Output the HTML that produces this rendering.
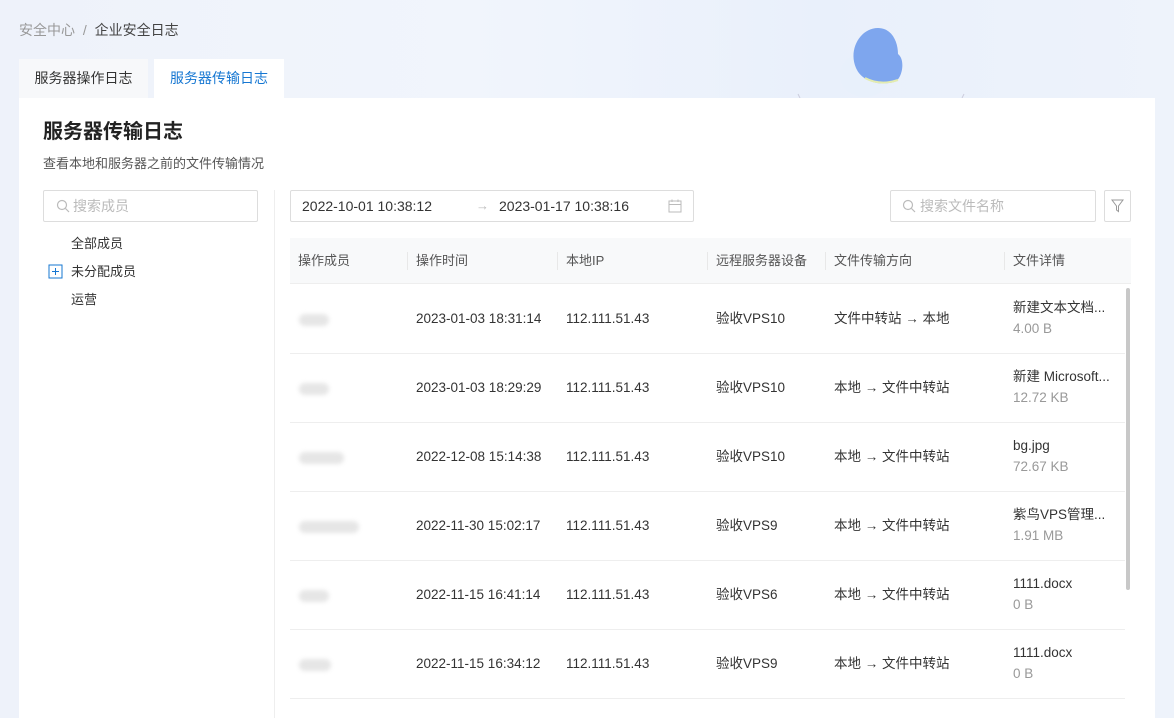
<!DOCTYPE html>
<html><head><meta charset="utf-8">
<style>
*{box-sizing:border-box;margin:0;padding:0}
body{width:1174px;height:718px;overflow:hidden;font-family:"Liberation Sans","Noto Sans CJK SC",sans-serif;background:linear-gradient(90deg,#eef2fa 0%,#f1f5fc 40%,#e9f0fb 70%,#eef3fb 100%);position:relative;color:#333}
.abs{position:absolute;line-height:20px}
.bc{left:19px;top:20px;font-size:14px;color:#999}
.bc b{font-weight:normal;color:#444}
.tab{top:59px;height:39px;font-size:14px;line-height:39px;text-align:center}
.card{left:19px;top:98px;width:1136px;height:620px;background:#fff}
.th{position:absolute;top:0;height:46px;line-height:46px;font-size:13px;color:#555}
.sep{position:absolute;top:14px;width:1px;height:18px;background:#e8e8e8}
.cell{position:absolute;font-size:13.5px;line-height:20px;height:20px;color:#333;white-space:nowrap}
.sub{color:#999}
.blob{position:absolute;height:12px;background:#e6e6e6;border-radius:6px;filter:blur(2px)}
</style></head><body>
<div class="abs bc">安全中心 <span style="margin:0 4px">/</span> <b>企业安全日志</b></div>
<svg class="abs" style="left:790px;top:20px" width="200" height="80">
<ellipse cx="75" cy="55" rx="25" ry="22" fill="#e8f0fb"/>
<path d="M66 48 C58 30 70 8 88 8 C102 8 108 22 108 34 C116 40 112 60 104 62 C90 66 72 62 66 48Z" fill="#7ea6ee"/>
<path d="M75 58 Q90 66 108 60" stroke="#e4ecb0" stroke-width="2" fill="none"/>
<path d="M10 78 L8 74 M172 78 L174 74" stroke="#ccd" />
</svg>
<div class="abs tab" style="left:19px;width:129px;background:#f7f8fa;color:#333;line-height:39px">服务器操作日志</div>
<div class="abs tab" style="left:154px;width:130px;background:#fff;color:#1677d2;line-height:39px">服务器传输日志</div>
<div class="abs card"></div>
<div class="abs" style="left:43px;top:120px;font-size:20px;line-height:24px;font-weight:bold;color:#222">服务器传输日志</div>
<div class="abs" style="left:43px;top:154px;font-size:13px;color:#555">查看本地和服务器之前的文件传输情况</div>
<div class="abs" style="left:43px;top:190px;width:215px;height:32px;border:1px solid #ddd;border-radius:2px"></div>
<svg class="abs" style="left:56px;top:199px" width="14" height="14"><circle cx="6" cy="6" r="4.5" stroke="#bbb" fill="none" stroke-width="1.2"/><path d="M9.5 9.5 L13 13" stroke="#bbb" stroke-width="1.2"/></svg>
<div class="abs" style="left:73px;top:196px;font-size:14px;color:#bbb">搜索成员</div>
<div class="abs" style="left:71px;top:234px;font-size:13px">全部成员</div>
<svg class="abs" style="left:48px;top:264px" width="15" height="15"><rect x="1" y="1" width="13" height="13" fill="none" stroke="#1677d2"/><path d="M4 7.5H11M7.5 4V11" stroke="#1677d2"/></svg>
<div class="abs" style="left:71px;top:262px;font-size:13px">未分配成员</div>
<div class="abs" style="left:71px;top:290px;font-size:13px">运营</div>
<div class="abs" style="left:274px;top:190px;width:1px;height:528px;background:#eee"></div>
<div class="abs" style="left:290px;top:190px;width:404px;height:32px;border:1px solid #ddd;border-radius:2px"></div>
<div class="abs" style="left:302px;top:196px;font-size:14px">2022-10-01 10:38:12</div>
<div class="abs" style="left:476px;top:196px;font-size:13px;color:#bbb">→</div>
<div class="abs" style="left:499px;top:196px;font-size:14px">2023-01-17 10:38:16</div>
<svg class="abs" style="left:668px;top:199px" width="14" height="14"><rect x="1" y="2" width="12" height="11" fill="none" stroke="#bbb"/><path d="M1 5.5H13M4 0.5V3M10 0.5V3" stroke="#bbb"/></svg>
<div class="abs" style="left:890px;top:190px;width:206px;height:32px;border:1px solid #ddd;border-radius:2px"></div>
<svg class="abs" style="left:902px;top:199px" width="14" height="14"><circle cx="6" cy="6" r="4.5" stroke="#bbb" fill="none" stroke-width="1.2"/><path d="M9.5 9.5 L13 13" stroke="#bbb" stroke-width="1.2"/></svg>
<div class="abs" style="left:920px;top:196px;font-size:14px;color:#bbb">搜索文件名称</div>
<div class="abs" style="left:1104px;top:190px;width:27px;height:32px;border:1px solid #ddd;border-radius:2px"></div>
<svg class="abs" style="left:1111px;top:199px" width="13" height="14"><path d="M1 1H12L7.5 7V12.5L5.5 11V7Z" fill="none" stroke="#999"/></svg>
<div class="abs" style="left:290px;top:238px;width:841px;height:480px">
<div style="position:absolute;left:0;top:0;width:841px;height:46px;background:#f8f9fa;border-bottom:1px solid #eee"></div>
<div class="th" style="left:8px">操作成员</div>
<div class="sep" style="left:117px"></div><div class="th" style="left:126px">操作时间</div>
<div class="sep" style="left:267px"></div><div class="th" style="left:276px">本地IP</div>
<div class="sep" style="left:417px"></div><div class="th" style="left:426px">远程服务器设备</div>
<div class="sep" style="left:535px"></div><div class="th" style="left:544px">文件传输方向</div>
<div class="sep" style="left:714px"></div><div class="th" style="left:723px">文件详情</div>
<div style="position:absolute;left:836px;top:50px;width:4px;height:302px;background:#c8c8c8;border-radius:2px"></div>
</div>
<div id="rows"></div>
<script>
var d=[["2023-01-03 18:31:14","验收VPS10","文件中转站 → 本地","新建文本文档...","4.00 B",30],
["2023-01-03 18:29:29","验收VPS10","本地 → 文件中转站","新建 Microsoft...","12.72 KB",30],
["2022-12-08 15:14:38","验收VPS10","本地 → 文件中转站","bg.jpg","72.67 KB",45],
["2022-11-30 15:02:17","验收VPS9","本地 → 文件中转站","紫鸟VPS管理...","1.91 MB",60],
["2022-11-15 16:41:14","验收VPS6","本地 → 文件中转站","1111.docx","0 B",30],
["2022-11-15 16:34:12","验收VPS9","本地 → 文件中转站","1111.docx","0 B",32]];
var h="";
d.forEach(function(r,i){var y=284+i*69;
h+='<div class="blob" style="left:299px;top:'+(y+30)+'px;width:'+r[5]+'px"></div>';
h+='<div class="cell" style="left:416px;top:'+(y+25)+'px">'+r[0]+'</div>';
h+='<div class="cell" style="left:566px;top:'+(y+25)+'px">112.111.51.43</div>';
h+='<div class="cell" style="left:716px;top:'+(y+25)+'px">'+r[1]+'</div>';
h+='<div class="cell" style="left:834px;top:'+(y+25)+'px">'+r[2]+'</div>';
h+='<div class="cell" style="left:1013px;top:'+(y+14)+'px">'+r[3]+'</div>';
h+='<div class="cell sub" style="left:1013px;top:'+(y+35)+'px">'+r[4]+'</div>';
h+='<div class="abs" style="left:290px;top:'+(y+69)+'px;width:835px;height:1px;background:#eee"></div>';
});
document.getElementById("rows").innerHTML=h;
</script>
</body></html>
